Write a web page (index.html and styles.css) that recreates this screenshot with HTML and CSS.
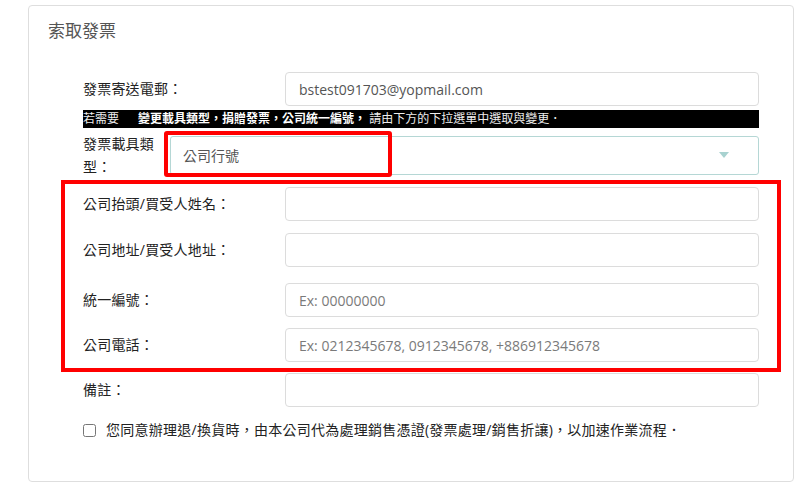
FILE: index.html
```html
<!DOCTYPE html>
<html lang="zh-Hant">
<head>
<meta charset="utf-8">
<title>索取發票</title>
<link rel="stylesheet" href="styles.css">
</head>
<body>
<div class="card">
  <div class="card-title">索取發票</div>
  <form class="form">
    <div class="row">
      <label class="label">發票寄送電郵：</label>
      <input class="input" type="text" value="bstest091703@yopmail.com">
    </div>
    <div class="hint">若需要<b class="hint-strong">變更載具類型，捐贈發票，公司統一編號，</b> 請由下方的下拉選單中選取與變更．</div>
    <div class="row row-select">
      <label class="label label-narrow">發票載具類型：</label>
      <div class="select">
        <span class="select-text">公司行號</span>
        <span class="select-arrow"></span>
        <span class="mark mark-select"></span>
      </div>
    </div>
    <div class="mark-group">
      <div class="row">
        <label class="label">公司抬頭/買受人姓名：</label>
        <input class="input" type="text">
      </div>
      <div class="row row-b">
        <label class="label">公司地址/買受人地址：</label>
        <input class="input" type="text">
      </div>
      <div class="row row-c">
        <label class="label">統一編號：</label>
        <input class="input" type="text" placeholder="Ex: 00000000">
      </div>
      <div class="row row-d">
        <label class="label">公司電話：</label>
        <input class="input" type="text" placeholder="Ex: 0212345678, 0912345678, +886912345678">
      </div>
    </div>
    <div class="row row-note">
      <label class="label">備註：</label>
      <input class="input" type="text">
    </div>
    <label class="check-row">
      <input class="check" type="checkbox">
      <span class="check-text">您同意辦理退/換貨時，由本公司代為處理銷售憑證(發票處理/銷售折讓)，以加速作業流程．</span>
    </label>
  </form>
</div>
</body>
</html>
```
FILE: styles.css
```css
* { box-sizing: border-box; }

html, body {
  margin: 0;
  padding: 0;
  background: #fff;
}

body {
  font-family: "Open Sans", "Noto Sans CJK TC", sans-serif;
  font-size: 14px;
  color: #333;
}

.card {
  margin: 5px 0 0 28px;
  width: 766px;
  border: 1px solid #dedede;
  border-radius: 4px;
  padding: 14px 19px 41px 19px;
}

.card-title {
  font-size: 17px;
  line-height: 22px;
  color: #555;
}

.form {
  margin: 30px 0 0 35px;
  width: 676px;
}

.row {
  display: flex;
  align-items: center;
}

.label {
  width: 202px;
  flex: none;
  font-size: 14px;
  line-height: 20px;
  color: #222;
  letter-spacing: 0.2px;
}

.input {
  flex: 1;
  height: 34px;
  border: 1px solid #dcdcdc;
  border-radius: 4px;
  padding: 0 13px;
  font-family: "Open Sans", "Noto Sans CJK TC", sans-serif;
  font-size: 14px;
  color: #555;
  background: #fff;
  outline: none;
}

.input::placeholder {
  color: #7a7a7a;
}

.hint {
  margin-top: 4px;
  height: 18px;
  line-height: 18px;
  background: #000;
  color: #eee;
  font-size: 12px;
  white-space: nowrap;
  overflow: hidden;
}

.hint-strong {
  color: #fff;
  font-weight: 700;
  margin-left: 19px;
}

.row-select {
  margin-top: 4px;
  height: 46px;
}

.label-narrow {
  width: 80px;
  margin-right: 7px;
  line-height: 23px;
}

.select {
  position: relative;
  flex: 1;
  height: 39px;
  border: 1px solid #b5d7d5;
  border-radius: 3px;
  display: flex;
  align-items: center;
  padding: 0 29px 0 12px;
  color: #555;
}

.select-text {
  flex: 1;
  font-size: 14px;
}

.select-arrow {
  width: 0;
  height: 0;
  border-left: 5px solid transparent;
  border-right: 5px solid transparent;
  border-top: 6px solid #a8d2d0;
}

.mark {
  border: 4px solid #f00;
  border-radius: 3px;
}

.mark-select {
  position: absolute;
  left: -7px;
  top: -6px;
  width: 228px;
  height: 46px;
}

.mark-group {
  margin: 2px -22px 0;
  border: 4px solid #f00;
  padding: 3px 18px 6px;
}

.row-b { margin-top: 12px; }
.row-c { margin-top: 16px; }
.row-d { margin-top: 11px; }
.row-note { margin-top: 1px; }

.check-row {
  display: flex;
  align-items: center;
  margin-top: 13px;
  height: 20px;
}

.check {
  width: 13px;
  height: 13px;
  margin: 0 10px 0 0;
  flex: none;
}

.check-text {
  font-size: 14px;
  line-height: 20px;
  color: #222;
  letter-spacing: 0.25px;
  white-space: nowrap;
}
```
